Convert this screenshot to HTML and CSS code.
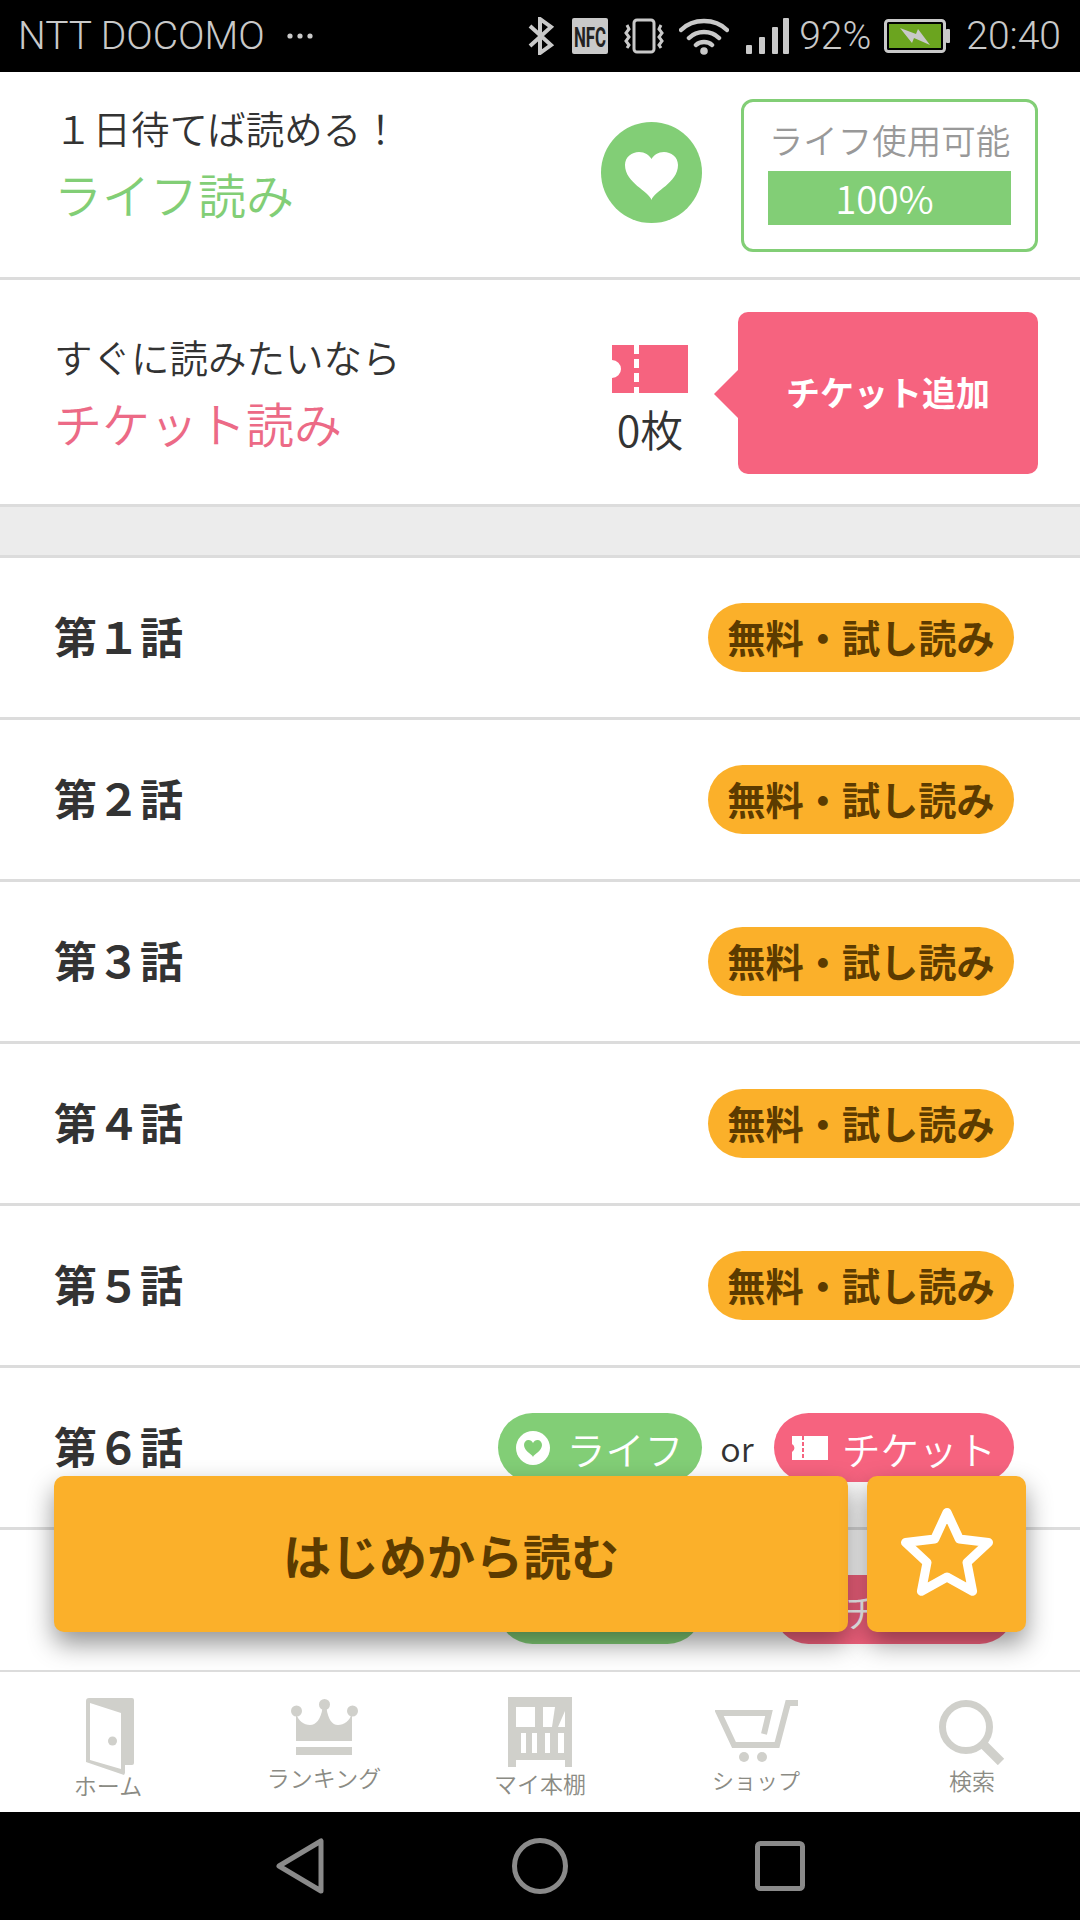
FILE: index.html
```html
<!DOCTYPE html>
<html lang="ja">
<head>
    <meta charset="utf-8" />
    <title>第1話 - チケット読み</title>
    <link rel="stylesheet" href="styles.css">
</head>
<body>
<div class="app">
    <div class="statusbar">
        <span class="carrier">NTT DOCOMO</span>
        <svg class="dots" width="26" height="6" viewBox="0 0 26 6"><circle cx="3" cy="3" r="2.6"/><circle cx="13" cy="3" r="2.6"/><circle cx="23" cy="3" r="2.6"/></svg>
        <div class="status-right">
            <svg width="28" height="38" viewBox="0 0 28 38" class="ic-bt"><path d="M3 9 L24 28 L13 36 V2 L24 10 L3 29" fill="none" stroke="#c9c9c9" stroke-width="4"/></svg>
            <svg width="36" height="36" viewBox="0 0 36 36" class="ic-nfc"><rect width="36" height="36" rx="2" fill="#c9c9c9"/><text transform="translate(2 29) scale(.6 1)" font-size="28" font-weight="700" fill="#222" font-family="Roboto">NFC</text></svg>
            <svg width="40" height="36" viewBox="0 0 40 36" class="ic-vib"><rect x="10" y="2" width="20" height="32" rx="3" fill="none" stroke="#c9c9c9" stroke-width="3"/><path d="M3 7 L5 11 L2 15 L5 19 L2 23 L5 27 L3 30 M37 7 L35 11 L38 15 L35 19 L38 23 L35 27 L37 30" fill="none" stroke="#c9c9c9" stroke-width="3"/></svg>
            <svg width="50" height="38" viewBox="0 0 50 38" class="ic-wifi"><path d="M2 13 C14 1,36 1,48 13 M10 21 C18 13,32 13,40 21 M17 28 C21 24,29 24,33 28" fill="none" stroke="#c9c9c9" stroke-width="4.5" stroke-linecap="round"/><circle cx="25" cy="34" r="3.8" fill="#c9c9c9"/></svg>
            <svg width="44" height="36" viewBox="0 0 44 36" class="ic-sig"><rect x="0" y="27" width="6" height="9" rx="1" fill="#c9c9c9"/><rect x="13" y="19" width="6" height="17" rx="1" fill="#c9c9c9"/><rect x="26" y="9" width="6" height="27" rx="1" fill="#c9c9c9"/><rect x="37" y="0" width="6" height="36" rx="1" fill="#c9c9c9"/></svg>
            <span class="pct">92%</span>
            <svg width="67" height="34" viewBox="0 0 67 34" class="ic-bat"><rect x="1.5" y="1.5" width="59" height="31" rx="3" fill="none" stroke="#c9c9c9" stroke-width="3"/><rect x="5" y="5" width="52" height="24" fill="#6ba41f"/><rect x="62" y="10" width="4" height="14" rx="1" fill="#c9c9c9"/><path d="M16 9 L32 15 L34 10 L46 26 L30 19 L28 24 Z" fill="#c9c9c9"/></svg>
            <span class="clock">20:40</span>
        </div>
    </div>

    <div class="main">
        <section class="read-row life-row">
            <div class="read-text">
                <div class="read-sub">１日待てば読める！</div>
                <div class="read-title life-color">ライフ読み</div>
            </div>
            <div class="heart-circle">
                <svg width="101" height="101" viewBox="0 0 101 101"><circle cx="50.5" cy="50.5" r="50.5" fill="#82ce76"/><path d="M50.5 78 C48 69,24 61,24 43 C24 35,31 30,38 30 C44 30,48 33,50.5 37 C53 33,57 30,63 30 C70 30,77 35,77 43 C77 61,53 69,50.5 78Z" fill="#fff"/></svg>
            </div>
            <div class="life-box">
                <div class="life-label">ライフ使用可能</div>
                <div class="life-bar">100%</div>
            </div>
        </section>

        <section class="read-row ticket-row">
            <div class="read-text">
                <div class="read-sub">すぐに読みたいなら</div>
                <div class="read-title ticket-color">チケット読み</div>
            </div>
            <div class="ticket-count">
                <svg width="76" height="48" viewBox="0 0 76 48"><path d="M0 0 H76 V48 H0 V33 A9 9 0 0 0 0 15 Z" fill="#f6637f"/><path d="M24.5 0 V48" stroke="#fff" stroke-width="5" stroke-dasharray="9 5"/></svg>
                <span>0枚</span>
            </div>
            <a class="ticket-add">チケット追加</a>
        </section>

        <div class="band"></div>

        <div class="episode"><span class="ep-name">第１話</span><span class="pill pill-free">無料・試し読み</span></div>
        <div class="episode"><span class="ep-name">第２話</span><span class="pill pill-free">無料・試し読み</span></div>
        <div class="episode"><span class="ep-name">第３話</span><span class="pill pill-free">無料・試し読み</span></div>
        <div class="episode"><span class="ep-name">第４話</span><span class="pill pill-free">無料・試し読み</span></div>
        <div class="episode"><span class="ep-name">第５話</span><span class="pill pill-free">無料・試し読み</span></div>
        <div class="episode">
            <span class="ep-name">第６話</span>
            <span class="pill pill-life">
                <svg width="34" height="34" viewBox="0 0 34 34"><circle cx="17" cy="17" r="17" fill="#fff"/><path d="M17 26 C16 23,8 20,8 14 C8 11,10 9,12.5 9 C14.5 9,16 10,17 12 C18 10,19.5 9,21.5 9 C24 9,26 11,26 14 C26 20,18 23,17 26Z" fill="#82ce76"/></svg>
                ライフ
            </span>
            <span class="or">or</span>
            <span class="pill pill-ticket">
                <svg width="36" height="24" viewBox="0 0 36 24"><path d="M0 0 H36 V24 H0 V16 A4.5 4.5 0 0 0 0 8 Z" fill="#fff"/><path d="M11 0 V24" stroke="#f6637f" stroke-width="2" stroke-dasharray="4 2"/></svg>
                チケット
            </span>
        </div>
        <div class="episode">
            <span class="ep-name">第７話</span>
            <span class="pill pill-life">
                <svg width="34" height="34" viewBox="0 0 34 34"><circle cx="17" cy="17" r="17" fill="#fff"/></svg>
                ライフ
            </span>
            <span class="or">or</span>
            <span class="pill pill-ticket">
                <svg width="36" height="24" viewBox="0 0 36 24"><path d="M0 0 H36 V24 H0 V16 A4.5 4.5 0 0 0 0 8 Z" fill="#fff"/></svg>
                チケット
            </span>
        </div>
    </div>

    <div class="float-bar">
        <a class="start-btn">はじめから読む</a>
        <a class="star-btn">
            <svg width="159" height="156" viewBox="0 0 159 156"><path d="M80 36.4 L92.3 63 L121.5 66.5 L100 86.5 L105.6 115.3 L80 101 L54.4 115.3 L60 86.5 L38.5 66.5 L67.7 63 Z" fill="none" stroke="#fff" stroke-width="9" stroke-linejoin="round"/></svg>
        </a>
    </div>

    <nav class="tabbar">
        <a class="tab tab-home">
            <svg width="48" height="77" viewBox="0 0 48 77"><path fill-rule="evenodd" d="M3 0 H46 a2 2 0 0 1 2 2 V65 a2 2 0 0 1 -2 2 H39 V75 L38 77 L0 64 V3 a3 3 0 0 1 3-3 Z M4 5 L35 15 V71 L4 62 Z" fill="#d0d0cb"/><circle cx="26.5" cy="43" r="4.5" fill="#d0d0cb"/></svg>
            <span>ホーム</span>
        </a>
        <a class="tab tab-rank">
            <svg width="67" height="56" viewBox="0 0 67 56" fill="#d0d0cb"><circle cx="5.5" cy="12" r="5.5"/><circle cx="33.5" cy="5.5" r="5.5"/><circle cx="61.5" cy="12" r="5.5"/><path d="M5 14 V42 H61 V14 C59 22,53 26,47 26 C41 26,37 20,35.5 9 H31.5 C30 20,25 26,19 26 C13 26,7 22,5 14 Z"/><rect x="5" y="48" width="56" height="8"/></svg>
            <span>ランキング</span>
        </a>
        <a class="tab tab-shelf">
            <svg width="64" height="70" viewBox="0 0 64 70" fill="#d0d0cb"><path fill-rule="evenodd" d="M0 0 H64 V70 H57 V63 H8 V70 H0 Z M8 10 V30 H57 V10 Z M13 36 V56 H18 V36 Z M24 36 V56 H29 V36 Z M37 36 V56 H42 V36 Z M50 36 V56 H56 V36 Z"/><rect x="27" y="10" width="8" height="20"/><path d="M47 10 H57 V14 L50 30 H44 Z"/></svg>
            <span>マイ本棚</span>
        </a>
        <a class="tab tab-shop">
            <svg width="83" height="63" viewBox="0 0 83 63"><path d="M49 34 L54 13 H4 L19 45 H62 L73 3 H83" fill="none" stroke="#d0d0cb" stroke-width="6"/><circle cx="29" cy="57" r="5" fill="#d0d0cb"/><circle cx="47" cy="57" r="5" fill="#d0d0cb"/></svg>
            <span>ショップ</span>
        </a>
        <a class="tab tab-search">
            <svg width="66" height="66" viewBox="0 0 66 66"><circle cx="27" cy="28" r="23.5" fill="none" stroke="#d0d0cb" stroke-width="7"/><path d="M44 45 L62 63" stroke="#d0d0cb" stroke-width="9"/></svg>
            <span>検索</span>
        </a>
    </nav>

    <div class="softkeys">
        <svg width="52" height="58" viewBox="0 0 52 58"><path d="M46 4 V54 L4 29 Z" fill="none" stroke="#8a8a8a" stroke-width="5" stroke-linejoin="round"/></svg>
        <svg width="56" height="56" viewBox="0 0 56 56"><circle cx="28" cy="28" r="25.5" fill="none" stroke="#8a8a8a" stroke-width="5"/></svg>
        <svg class="key-recent" width="50" height="50" viewBox="0 0 50 50"><rect x="2.5" y="2.5" width="45" height="45" rx="3" fill="none" stroke="#8a8a8a" stroke-width="5"/></svg>
    </div>
</div>
</body>
</html>
```

FILE: styles.css
```css
*{box-sizing:border-box}
html,body{margin:0;padding:0;background:#fff}
body{font-family:"Noto Sans CJK JP","Noto Sans",sans-serif;color:#333}
.app{position:relative;width:1080px;height:1920px;display:flex;flex-direction:column;overflow:hidden}

/* status bar */
.statusbar{height:72px;background:#000;color:#c9c9c9;display:flex;align-items:center;padding:0 19px 0 18px;font-family:Roboto,sans-serif;font-weight:300;font-size:39px;flex:none}
.dots{fill:#c9c9c9;margin-left:22px}
.status-right{margin-left:auto;display:flex;align-items:center}
.ic-nfc{margin-left:17px}
.ic-vib{margin-left:16px}
.ic-wifi{margin-left:15px}
.ic-sig{margin-left:17px}
.pct{margin-left:9px}
.ic-bat{margin-left:13px}
.clock{margin-left:15px}

/* life / ticket */
.main{flex:1;overflow:hidden}
.read-row{display:flex;align-items:center;border-bottom:3px solid #dcdcdc}
.life-row{height:208px;padding:0 42px 0 54px}
.ticket-row{height:227px;padding:0 42px 0 54px}
.read-text{flex:1;margin-top:-24px}
.ticket-row .read-text{margin-top:0}
.read-sub{font-size:38.5px;line-height:50px;font-weight:350}
.read-title{font-size:48px;line-height:62px;font-weight:350;margin-top:10px}
.life-color{color:#82ce76}
.ticket-color{color:#ec6a86}
.heart-circle{width:101px;height:101px;margin:-5px 39px 0 0}
.heart-circle svg{display:block}
.life-box{width:297px;height:153px;border:3px solid #82ce76;border-radius:12px;padding:14px 24px 0;margin-top:2px;text-align:center}
.life-label{font-size:34.5px;line-height:46px;color:#999;font-weight:350;white-space:nowrap}
.life-bar{height:54px;line-height:52px;margin-top:9px;padding-right:10px;background:#82ce76;color:#fff;font-size:38.5px;font-weight:350}
.ticket-count{width:76px;margin-right:50px;display:flex;flex-direction:column;align-items:center;margin-top:24px;font-size:43px;line-height:70px;font-weight:350}
.ticket-count svg{display:block}
.ticket-add{position:relative;width:300px;height:162px;margin-top:2px;padding-bottom:4px;background:#f6637f;border-radius:10px;color:#fff;font-size:34px;font-weight:700;display:flex;align-items:center;justify-content:center}
.ticket-add::before{content:"";position:absolute;left:-24px;top:58px;border-style:solid;border-width:24px 24px 24px 0;border-color:transparent #f6637f transparent transparent}
.band{height:48px;background:#ececec}

/* episodes */
.episode{height:162px;display:flex;align-items:center;padding:0 66px 0 54px;border-top:3px solid #dcdcdc}
.ep-name{font-size:43px;line-height:50px;font-weight:700;margin-right:auto;margin-top:-5px;color:#333}
.pill{height:69px;border-radius:35px;display:flex;align-items:center;justify-content:center;white-space:nowrap;flex:none}
.pill-free{width:306px;padding-bottom:2px;background:#fbb02a;color:#5c3b00;font-size:38.2px;font-weight:700}
.pill-life{width:204px;background:#82ce76;color:#fff;font-size:39px;font-weight:350;gap:16px}
.pill-ticket{width:240px;background:#f6637f;color:#fff;font-size:38.5px;font-weight:350;gap:14px}
.or{width:72px;padding-right:2px;text-align:center;font-size:34px;color:#333;font-weight:350}

/* floating buttons */
.float-bar{position:absolute;left:54px;top:1476px;display:flex;gap:19px}
.start-btn,.star-btn{height:156px;background:#fbb02a;border-radius:10px;box-shadow:0 12px 26px rgba(0,0,0,.42);display:flex;align-items:center;justify-content:center}
.start-btn{width:794px;color:#5c3b00;font-size:48px;font-weight:700}
.star-btn{width:159px}

/* tabs */
.tabbar{height:142px;flex:none;display:flex;background:#fff;border-top:2px solid #dcdcdc;position:relative}
.tab{width:216px;display:flex;flex-direction:column;align-items:center;color:#8b8b84;font-size:23px;font-weight:350;line-height:26px}
.tab svg{display:block}
.tab-home{padding-top:26px}
.tab-home svg{margin-left:4px}
.tab-home span{margin-top:-3px}
.tab-rank{padding-top:27px}
.tab-rank span{margin-top:9px}
.tab-shelf{padding-top:25px}
.tab-shelf span{margin-top:3px}
.tab-shop{padding-top:28px}
.tab-shop span{margin-top:3px;font-size:22px}
.tab-search{padding-top:27px}
.tab-search span{margin-top:2px}

/* android keys */
.softkeys{height:108px;flex:none;background:#000;display:flex;align-items:center;padding-left:275px;gap:185px}
.key-recent{margin-left:2px}
```
